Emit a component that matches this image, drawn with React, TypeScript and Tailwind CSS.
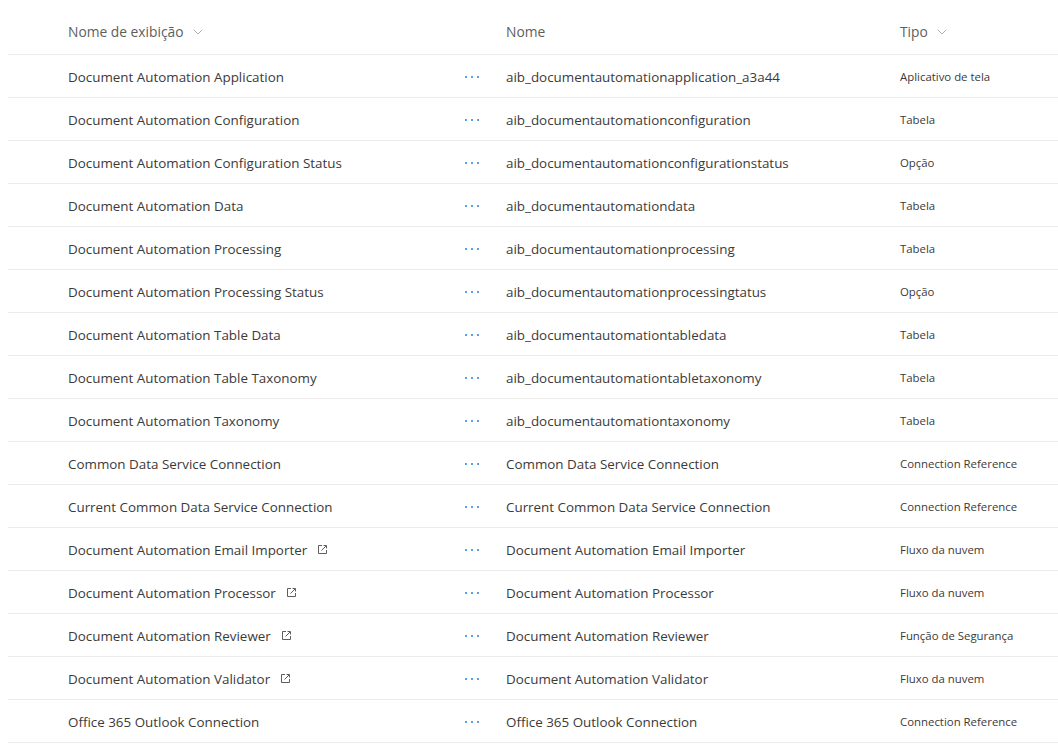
import { ChevronDown } from "lucide-react";

type Row = {
  display: string;
  name: string;
  type: string;
  external?: boolean;
};

const rows: Row[] = [
  { display: "Document Automation Application", name: "aib_documentautomationapplication_a3a44", type: "Aplicativo de tela" },
  { display: "Document Automation Configuration", name: "aib_documentautomationconfiguration", type: "Tabela" },
  { display: "Document Automation Configuration Status", name: "aib_documentautomationconfigurationstatus", type: "Opção" },
  { display: "Document Automation Data", name: "aib_documentautomationdata", type: "Tabela" },
  { display: "Document Automation Processing", name: "aib_documentautomationprocessing", type: "Tabela" },
  { display: "Document Automation Processing Status", name: "aib_documentautomationprocessingtatus", type: "Opção" },
  { display: "Document Automation Table Data", name: "aib_documentautomationtabledata", type: "Tabela" },
  { display: "Document Automation Table Taxonomy", name: "aib_documentautomationtabletaxonomy", type: "Tabela" },
  { display: "Document Automation Taxonomy", name: "aib_documentautomationtaxonomy", type: "Tabela" },
  { display: "Common Data Service Connection", name: "Common Data Service Connection", type: "Connection Reference" },
  { display: "Current Common Data Service Connection", name: "Current Common Data Service Connection", type: "Connection Reference" },
  { display: "Document Automation Email Importer", name: "Document Automation Email Importer", type: "Fluxo da nuvem", external: true },
  { display: "Document Automation Processor", name: "Document Automation Processor", type: "Fluxo da nuvem", external: true },
  { display: "Document Automation Reviewer", name: "Document Automation Reviewer", type: "Função de Segurança", external: true },
  { display: "Document Automation Validator", name: "Document Automation Validator", type: "Fluxo da nuvem", external: true },
  { display: "Office 365 Outlook Connection", name: "Office 365 Outlook Connection", type: "Connection Reference" },
];

const ExternalIcon = () => (
  <svg width="11" height="11" viewBox="0 0 11 11" fill="none" className="ml-[10px] text-[#605e5c]">
    <path d="M5 1.5H1.5v8h8V6" stroke="currentColor" strokeWidth="1" />
    <path d="M4.5 6.5 9 2M6.5 1.5H9.5V4.5" stroke="currentColor" strokeWidth="1" />
  </svg>
);

const Dots = () => (
  <div className="flex gap-[4px]">
    <span className="w-[2px] h-[2px] bg-[#5b9ff0]" />
    <span className="w-[2px] h-[2px] bg-[#5b9ff0]" />
    <span className="w-[2px] h-[2px] bg-[#5b9ff0]" />
  </div>
);

export default function App() {
  return (
    <div className="w-[1058px] h-[753px] bg-white pl-[8px] text-[#3b3a39] font-['Segoe_UI','Open_Sans',sans-serif] overflow-hidden">
      <div className="flex h-[55px] items-center pt-[10px] border-b border-[#edebe9] text-[13.8px] text-[#605e5c]">
        <div className="w-[398px] pl-[60px] flex items-center">
          Nome de exibição
          <ChevronDown className="w-[16px] h-[16px] ml-[6px] text-[#8a8886]" strokeWidth={1} />
        </div>
        <div className="w-[100px]" />
        <div className="w-[394px]">Nome</div>
        <div className="flex items-center">
          Tipo
          <ChevronDown className="w-[16px] h-[16px] ml-[6px] text-[#8a8886]" strokeWidth={1} />
        </div>
      </div>
      {rows.map((r) => (
        <div key={r.display} className="flex h-[43px] items-center pt-[2px] border-b border-[#edebe9]">
          <div className="w-[398px] pl-[60px] flex items-center text-[13.4px]">
            {r.display}
            {r.external && <ExternalIcon />}
          </div>
          <div className="w-[100px] flex pl-[59px]">
            <Dots />
          </div>
          <div className="w-[394px] text-[13.4px]">{r.name}</div>
          <div className="text-[11.4px]">{r.type}</div>
        </div>
      ))}
    </div>
  );
}
